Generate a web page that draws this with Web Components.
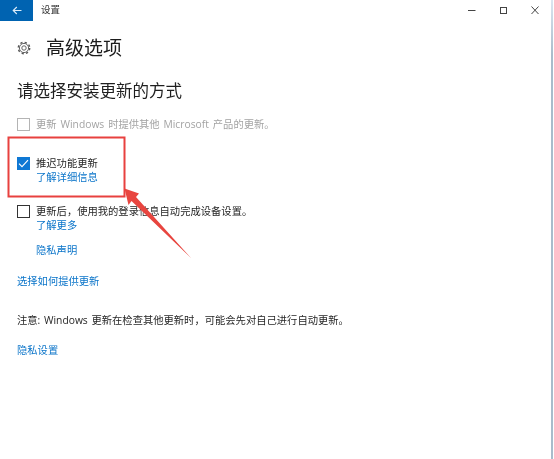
<!DOCTYPE html>
<html lang="zh-CN"><head><meta charset="utf-8"><title>设置</title>
<style>
html,body{margin:0;padding:0;background:#fff;height:100%}
body{font-family:"Open Sans","Noto Sans CJK SC",sans-serif;color:#222;overflow:hidden}
</style></head><body>
<settings-window>
  <title-bar slot="bar" label="设置"></title-bar>
  <page-header label="高级选项"></page-header>
  <section-title style="margin-top:18px">请选择安装更新的方式</section-title>
  <check-row disabled style="margin-top:15px;word-spacing:1.2px">更新 Windows 时提供其他 Microsoft 产品的更新。</check-row>
  <check-row checked style="margin-top:26px">推迟功能更新<text-link slot="link">了解详细信息</text-link></check-row>
  <check-row style="margin-top:21px">更新后，使用我的登录信息自动完成设备设置。<text-link slot="link">了解更多</text-link></check-row>
  <text-link style="margin:11px 0 0 19px">隐私声明</text-link>
  <text-link style="margin-top:17px">选择如何提供更新</text-link>
  <plain-note style="margin-top:25px;word-spacing:1px">注意: Windows 更新在检查其他更新时，可能会先对自己进行自动更新。</plain-note>
  <text-link style="margin-top:16px">隐私设置</text-link>
  <red-annotation slot="over"></red-annotation>
</settings-window>
<script>
const def=(name,html)=>customElements.define(name,class extends HTMLElement{
  connectedCallback(){
    if(this.shadowRoot)return;
    const r=this.attachShadow({mode:"open"});
    r.innerHTML=html;
    r.querySelectorAll("[data-label]").forEach(e=>e.textContent=this.getAttribute("label")||"");
  }
});
def("settings-window",`<style>
:host{display:block;position:relative;box-sizing:border-box;width:554px;height:459px;background:#fff;overflow:hidden}
.edge{position:absolute;left:551px;top:0;width:2px;height:459px;background:linear-gradient(#dbe6f1,#a9bccb 12%)}
main{display:flex;flex-direction:column;padding:0 0 0 17px;filter:blur(.3px)}
</style><slot name="bar"></slot><main><slot></slot></main><div class="edge"></div><slot name="over"></slot>`);
def("title-bar",`<style>
:host{display:flex;align-items:flex-start;height:21px;font-size:9.5px;color:#333;filter:blur(.25px)}
.back{width:33px;height:21px;background:#0063b1;display:flex;align-items:center;justify-content:center;flex:none}
.t{margin-left:8px;line-height:20px}
.sp{flex:1}
.c{display:flex;margin-right:2px;margin-top:5px}
.c svg{display:block;width:32px;height:11px}
</style>
<div class="back"><svg width="10" height="9" viewBox="0 0 10 9"><path d="M9.5 4.5H1.2M4.8 1 1.2 4.5 4.8 8" fill="none" stroke="#dcecf9" stroke-width="1.1"/></svg></div>
<span class="t" data-label></span><span class="sp"></span>
<div class="c">
<svg viewBox="0 0 32 11"><path d="M12 5.5h7.5" stroke="#444" stroke-width="1"/></svg>
<svg viewBox="0 0 32 11"><rect x="12.5" y="2.5" width="6" height="6" fill="none" stroke="#444"/></svg>
<svg viewBox="0 0 32 11"><path d="M11.5 1.5l7 7.5M18.5 1.5l-7 7.5" stroke="#444" fill="none"/></svg>
</div>`);
def("page-header",`<style>
:host{display:flex;align-items:center;gap:15px;margin-top:14px;height:26px}
svg{display:block;flex:none}
span{font-size:19px;line-height:26px;color:#1c1c1c}
</style>
<svg width="14" height="14" viewBox="0 0 14 14" fill="none" stroke="#555"><circle cx="7" cy="7" r="2.2" stroke-width=".9"/><circle cx="7" cy="7" r="4.6" stroke-width=".9"/><circle cx="7" cy="7" r="5.7" stroke-width="1.4" stroke-dasharray="2.2 2.28"/></svg>
<span data-label></span>`);
def("section-title",`<style>:host{display:block;font-size:16.5px;line-height:24px;color:#1f1f1f}</style><slot></slot>`);
def("check-row",`<style>
:host{display:flex;align-items:flex-start;gap:6px;font-size:10.3px;line-height:13px;color:#262626}
:host([disabled]){color:#a3a3a3}
.b{box-sizing:border-box;width:13px;height:13px;border:1.5px solid #333;flex:none;display:flex;align-items:center;justify-content:center}
:host([disabled]) .b{border-color:#b4b4b4}
:host([checked]) .b{background:#0f78d4;border-color:#0f78d4}
svg{display:none}
:host([checked]) svg{display:block}
.txt{display:flex;flex-direction:column}
.m{white-space:nowrap}
</style>
<span class="b"><svg width="11" height="9" viewBox="0 0 11 9"><path d="M1 4.6 4 7.6 10 1.2" fill="none" stroke="#fff" stroke-width="1.1"/></svg></span>
<span class="txt"><span class="m"><slot></slot></span><slot name="link"></slot></span>`);
def("text-link",`<style>:host{display:block;font-size:10.3px;line-height:14px;color:#0a74c9}</style><slot></slot>`);
def("plain-note",`<style>:host{display:block;font-size:10.3px;line-height:14px;color:#262626}</style><slot></slot>`);
def("red-annotation",`<style>
:host{position:absolute;left:0;top:0;width:554px;height:459px;pointer-events:none;display:block}
svg{display:block}
</style>
<svg width="554" height="459" viewBox="0 0 554 459">
<rect x="8.5" y="137.5" width="116" height="59" fill="none" stroke="#e8413f" stroke-width="2"/>
<path d="M124.5 188.5 139 193.5 136 197 191 258 131.5 201 128.5 205z" fill="#e8453f"/>
</svg>`);
</script>
</body></html>
